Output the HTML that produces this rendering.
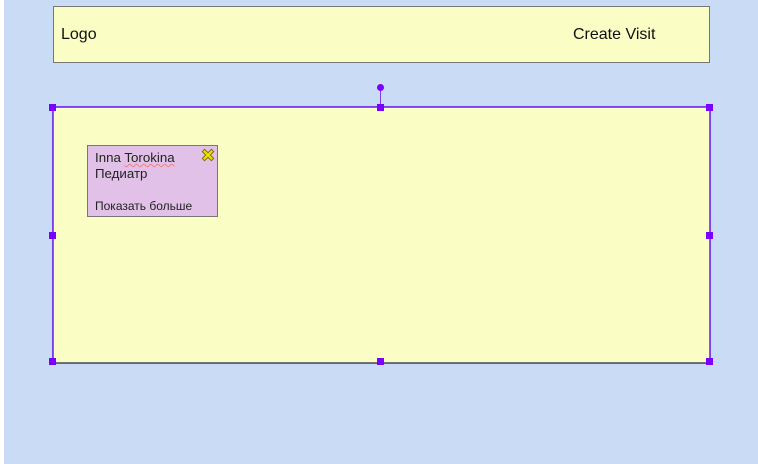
<!DOCTYPE html>
<html><head><style>
body{margin:0;width:758px;height:464px;background:#cadbf5;position:relative;overflow:hidden;font-family:"Liberation Sans",sans-serif}
.strip{position:absolute;left:0;top:0;width:4px;height:464px;background:#fff}
.hdr{position:absolute;left:53px;top:6px;width:655px;height:55px;background:#fafdc4;border:1px solid #777}
.hdr span{position:absolute;top:19px;font-size:16px;color:#111}
.main{position:absolute;left:53px;top:107px;width:655px;height:254px;background:#fafdc4;border:1px solid #777;box-shadow:0 0 0 1px #7a3ff0}
.h{position:absolute;width:7px;height:7px;background:#7a00ff}
.card{position:absolute;left:87px;top:145px;width:129px;height:70px;background:#e2c1e8;border:1px solid #777;font-size:13.3px;color:#222}
</style></head><body>
<div class="strip"></div>
<div class="hdr"><span style="left:7px">Logo</span><span style="left:519px">Create Visit</span></div>
<div class="main"></div>
<div style="position:absolute;left:380px;top:89px;width:1px;height:18px;background:#7a3ff0"></div>
<div style="position:absolute;left:377px;top:84px;width:7px;height:7px;border-radius:50%;background:#7a00ff"></div>
<div class="h" style="left:49px;top:104px"></div><div class="h" style="left:377px;top:104px"></div><div class="h" style="left:706px;top:104px"></div>
<div class="h" style="left:49px;top:232px"></div><div class="h" style="left:706px;top:232px"></div>
<div class="h" style="left:49px;top:358px"></div><div class="h" style="left:377px;top:358px"></div><div class="h" style="left:706px;top:358px"></div>
<div class="card">
<div style="position:absolute;left:7px;top:4px">Inna <span style="text-decoration:underline wavy #f08080;text-decoration-thickness:1px">Torokina</span></div>
<div style="position:absolute;left:7px;top:20px">Педиатр</div>
<div style="position:absolute;left:7px;top:53px;font-size:12px">Показать больше</div>
<svg style="position:absolute;left:112px;top:1px" width="16" height="16" viewBox="0 0 14 14"><path d="M2 4L4 2L7 5L10 2L12 4L9 7L12 10L10 12L7 9L4 12L2 10L5 7Z" fill="#ebe000" stroke="#7a6a00" stroke-width="0.8"/></svg>
</div>
</body></html>
